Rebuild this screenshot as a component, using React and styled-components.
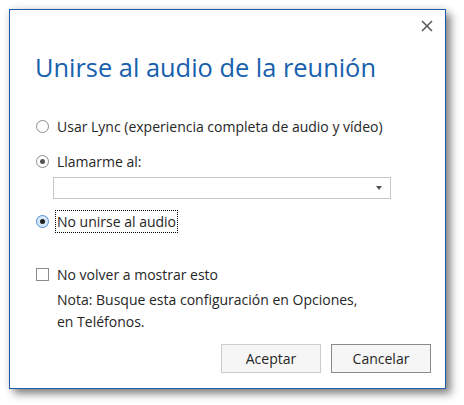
import styled, { createGlobalStyle } from 'styled-components';

const GlobalStyle = createGlobalStyle`
  html, body {
    margin: 0;
    padding: 0;
    background: #ffffff;
  }
  body {
    font-family: "Open Sans", "Noto Sans", "Liberation Sans", sans-serif;
    color: #262626;
  }
`;

const Page = styled.div`
  width: 464px;
  height: 405px;
  padding: 9px 0 0 9px;
  box-sizing: border-box;
`;

const Dialog = styled.div`
  position: relative;
  width: 437px;
  height: 380px;
  box-sizing: border-box;
  border: 1px solid #1c5ca8;
  background: #ffffff;
  box-shadow: 5px 5px 8px rgba(0, 0, 0, 0.45), 0 0 8px rgba(0, 0, 0, 0.12);
  display: flex;
  flex-direction: column;
`;

const TopBar = styled.div`
  display: flex;
  justify-content: flex-end;
  height: 34px;
  padding: 10px 12px 0 0;
  box-sizing: border-box;
`;

const CloseButton = styled.button`
  border: none;
  background: none;
  padding: 0;
  width: 12px;
  height: 12px;
  cursor: pointer;
  display: flex;
`;

const Title = styled.h1`
  margin: 6px 0 0 25px;
  font-size: 25.4px;
  font-weight: 400;
  color: #1760ad;
  line-height: 34px;
`;

const Body = styled.div`
  display: flex;
  flex-direction: column;
  padding-left: 25px;
  margin-top: 31px;
`;

const OptionRow = styled.label`
  display: flex;
  align-items: center;
  gap: 6px;
  height: 22px;
  font-size: 14px;
  margin-bottom: ${(p) => p.$gap || 0}px;
`;

const Radio = styled.span`
  width: 13px;
  height: 13px;
  box-sizing: border-box;
  border-radius: 50%;
  border: 1px solid ${(p) => (p.$focused ? '#4f8ed4' : '#8c8c8c')};
  background: ${(p) => (p.$focused ? '#d4e6f8' : '#ffffff')};
  display: flex;
  align-items: center;
  justify-content: center;
  flex-shrink: 0;
  margin-left: 1px;

  &::after {
    content: '';
    width: 5px;
    height: 5px;
    border-radius: 50%;
    background: ${(p) => (p.$focused ? '#1f1f1f' : '#555555')};
    display: ${(p) => (p.$checked ? 'block' : 'none')};
  }
`;

const OptionText = styled.span`
  padding: 1px 1px;
  border: 1px dotted ${(p) => (p.$focused ? '#000000' : 'transparent')};
  line-height: 19px;
`;

const Select = styled.div`
  margin: 0 0 11px 18px;
  width: 338px;
  height: 22px;
  box-sizing: border-box;
  border: 1px solid #c6c6c6;
  display: flex;
  align-items: center;
  justify-content: flex-end;
  padding-right: 8px;
`;

const Caret = styled.span`
  width: 0;
  height: 0;
  border-left: 3.5px solid transparent;
  border-right: 3.5px solid transparent;
  border-top: 4px solid #555555;
`;

const CheckRow = styled.label`
  display: flex;
  align-items: center;
  gap: 8px;
  margin-top: 31px;
  height: 22px;
  font-size: 14px;
`;

const Checkbox = styled.span`
  width: 13px;
  height: 13px;
  box-sizing: border-box;
  border: 1px solid #8c8c8c;
  background: #ffffff;
  flex-shrink: 0;
  margin-left: 1px;
`;

const Note = styled.p`
  margin: 4px 0 0 22px;
  font-size: 14px;
  line-height: 22px;
`;

const Footer = styled.div`
  margin-top: auto;
  display: flex;
  justify-content: flex-end;
  gap: 10px;
  padding: 0 14px 15px 0;
`;

const Button = styled.button`
  width: 100px;
  height: 29px;
  box-sizing: border-box;
  border: 1px solid ${(p) => (p.$default ? '#8a8a8a' : '#cccccc')};
  background: #f6f6f6;
  font-family: inherit;
  font-size: 14px;
  color: #262626;
  padding: 0;
  cursor: pointer;
`;

export default function App() {
  return (
    <>
      <GlobalStyle />
      <Page>
        <Dialog>
          <TopBar>
            <CloseButton aria-label="Cerrar">
              <svg width="12" height="12" viewBox="0 0 12 12">
                <path d="M1 1 L11 11 M11 1 L1 11" stroke="#555555" strokeWidth="1.5" />
              </svg>
            </CloseButton>
          </TopBar>
          <Title>Unirse al audio de la reunión</Title>
          <Body>
            <OptionRow $gap={13}>
              <Radio />
              <OptionText>Usar Lync (experiencia completa de audio y vídeo)</OptionText>
            </OptionRow>
            <OptionRow $gap={5}>
              <Radio $checked />
              <OptionText>Llamarme al:</OptionText>
            </OptionRow>
            <Select>
              <Caret />
            </Select>
            <OptionRow>
              <Radio $checked $focused />
              <OptionText $focused>No unirse al audio</OptionText>
            </OptionRow>
            <CheckRow>
              <Checkbox />
              No volver a mostrar esto
            </CheckRow>
            <Note>
              Nota: Busque esta configuración en Opciones,
              <br />
              en Teléfonos.
            </Note>
          </Body>
          <Footer>
            <Button>Aceptar</Button>
            <Button $default>Cancelar</Button>
          </Footer>
        </Dialog>
      </Page>
    </>
  );
}
